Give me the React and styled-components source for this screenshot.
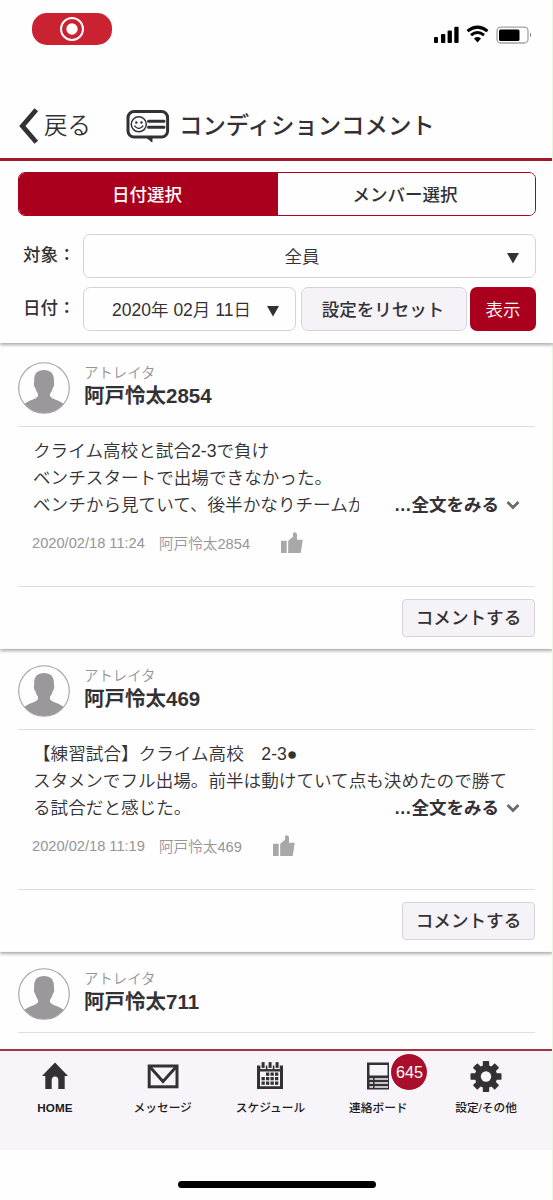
import styled, { createGlobalStyle } from "styled-components";

const red = "#ab001d";
const ink = "#333135";

const GlobalStyle = createGlobalStyle`
  * {
    box-sizing: border-box;
  }
  body {
    margin: 0;
    background: #fefefe;
    color: ${ink};
    font-family: "Liberation Sans", "Noto Sans CJK JP", sans-serif;
    overflow: hidden;
  }
  button {
    font-family: inherit;
    color: inherit;
    padding: 0;
  }
  svg {
    display: block;
    flex: none;
  }
`;

const Screen = styled.div`
  position: relative;
  display: flex;
  flex-direction: column;
  width: 553px;
  height: 1200px;
  overflow: hidden;
`;

const ScreenEdge = styled.div`
  position: absolute;
  top: 0;
  right: 0;
  bottom: 0;
  width: 1px;
  background: #e2fbdc;
`;

const StatusBar = styled.div`
  display: flex;
  justify-content: space-between;
  height: 93px;
  padding: 13px 21px 0 32px;
`;

const RecordPill = styled.div`
  display: flex;
  align-items: center;
  justify-content: center;
  width: 80px;
  height: 32px;
  border-radius: 15px;
  background: #ca2230;
`;

const StatusIcons = styled.div`
  padding-top: 11px;
`;

const Header = styled.header`
  display: flex;
  align-items: center;
  height: 68px;
  padding: 0 19px;
  border-bottom: 3px solid #a31a29;
`;

const Back = styled.div`
  display: flex;
  align-items: center;
  width: 107px;
  gap: 5px;
  font-size: 23.4px;
  font-weight: 350;
  line-height: 32px;
`;

const PageTitle = styled.h1`
  margin: 0 0 0 9px;
  font-size: 23.4px;
  font-weight: 500;
  line-height: 32px;
  white-space: nowrap;
`;

const Filters = styled.section`
  position: relative;
  z-index: 1;
  height: 182px;
  padding: 11px 17px 0 18px;
  background: #fefefe;
  box-shadow: 0 2px 3px rgba(60, 50, 60, 0.4);
`;

const Tabs = styled.div`
  display: flex;
  height: 44px;
  margin-bottom: 18px;
  border: 1.5px solid ${red};
  border-radius: 7px;
  overflow: hidden;
`;

const TabButton = styled.button`
  width: ${p => (p.$active ? "259px" : "auto")};
  flex: ${p => (p.$active ? "none" : 1)};
  padding: 0 3px 2px 0;
  border: 0;
  background: ${p => (p.$active ? red : "#fefefe")};
  color: ${p => (p.$active ? "#fff" : ink)};
  font-size: 17.5px;
  font-weight: 500;
`;

const FilterRow = styled.div`
  display: flex;
  height: 44px;
  margin: 0 -1px 9px 0;
`;

const Label = styled.div`
  width: 65px;
  padding-left: 5px;
  font-size: 17.5px;
  font-weight: 500;
  line-height: 43px;
  white-space: nowrap;
`;

const Select = styled.div`
  display: flex;
  align-items: center;
  width: ${p => p.$width}px;
  padding-right: 16px;
  border: 1.5px solid #d5d3d6;
  border-radius: 7px;
  font-size: 17.5px;
  font-weight: 350;
  span {
    flex: 1;
    padding: ${p => p.$inset || 0};
    text-align: center;
    white-space: nowrap;
  }
  svg {
    margin-top: 3px;
  }
`;

const ResetButton = styled.button`
  width: 166px;
  margin: 0 3px 0 5px;
  padding: 0 2px 2px 0;
  border: 1.5px solid #d5d3d6;
  border-radius: 7px;
  background: #f5f3f7;
  font-size: 17.5px;
  font-weight: 500;
`;

const ShowButton = styled.button`
  width: 66px;
  padding-bottom: 1px;
  border: 0;
  border-radius: 7px;
  background: ${red};
  color: #fff;
  font-size: 17.5px;
  font-weight: 350;
`;

const Feed = styled.main`
  flex: 1;
  min-height: 0;
  padding-top: 3px;
  overflow: hidden;
`;

const Card = styled.article`
  height: 303px;
  padding: 16px 18px 0;
  box-shadow: 0 2px 3px rgba(60, 50, 60, 0.4);
`;

const CardHead = styled.div`
  display: flex;
  height: 65px;
  gap: 14px;
  border-bottom: 1.5px solid #e0dee1;
`;

const Team = styled.div`
  padding-top: 1px;
  color: #979499;
  font-size: 14.4px;
  font-weight: 350;
  line-height: 20px;
`;

const Name = styled.div`
  font-size: 20.5px;
  font-weight: 700;
  line-height: 26px;
`;

const CardBody = styled.div`
  height: 160px;
  padding: 11px 0 0 15px;
  border-bottom: 1.5px solid #e0dee1;
`;

const Comment = styled.div`
  height: 81px;
  font-size: 17.6px;
  font-weight: 350;
  line-height: 26.8px;
  white-space: nowrap;
`;

const LastLine = styled.div`
  display: flex;
  justify-content: space-between;
  height: 27px;
`;

const Clipped = styled.span`
  width: 326px;
  overflow: hidden;
`;

const ReadMore = styled.div`
  display: flex;
  align-items: center;
  height: 27px;
  padding-right: 15px;
  gap: 7px;
  font-size: 17.5px;
  font-weight: 700;
  line-height: 27px;
`;

const Meta = styled.div`
  display: flex;
  align-items: center;
  height: 27px;
  margin: 10px 0 0 -1px;
  color: #97949a;
  font-size: 14.65px;
  font-weight: 350;
  white-space: nowrap;
  svg {
    margin-left: 31px;
  }
`;

const Author = styled.span`
  margin-left: 14px;
`;

const CommentButton = styled.button`
  display: block;
  width: 133px;
  height: 38px;
  margin: 12px 0 0 auto;
  padding: 0 0 3px;
  border: 1.5px solid #d5d3d7;
  border-radius: 4px;
  background: #f5f3f7;
  font-size: 17.6px;
  font-weight: 500;
`;

const NavBar = styled.nav`
  display: flex;
  height: 101px;
  padding: 0 13px 0 1px;
  border-top: 2px solid #a63242;
  background: #f7f5f9;
`;

const NavItem = styled.div`
  position: relative;
  display: flex;
  flex-direction: column;
  align-items: center;
  flex: none;
  width: 107.8px;
  padding-top: 9px;
  color: #1c1a1d;
  font-size: 11.7px;
  font-weight: ${p => (p.$latin ? 700 : 500)};
  line-height: 18px;
  white-space: nowrap;
  svg {
    margin-bottom: 7px;
  }
`;

const Badge = styled.div`
  position: absolute;
  top: 2px;
  left: 66px;
  width: 38px;
  height: 38px;
  border: 1px solid #fff;
  border-radius: 50%;
  background: #a90f2d;
  color: #fff;
  font-size: 16.2px;
  font-weight: 400;
  line-height: 36px;
  text-align: center;
`;

const HomeArea = styled.div`
  display: flex;
  justify-content: center;
  height: 50px;
  padding-top: 31px;
  &::after {
    content: "";
    width: 198px;
    height: 7px;
    border-radius: 4px;
    background: #000;
  }
`;

const RecordIcon = () => (
  <svg width="26" height="26" viewBox="0 0 26 26">
    <circle cx="13" cy="13" r="11" fill="none" stroke="#fff" strokeWidth="2" />
    <circle cx="13" cy="13" r="5.7" fill="#fff" />
  </svg>
);

const SignalIcons = () => (
  <svg width="99" height="20" viewBox="0 0 99 20">
    <rect x="1" y="13" width="4" height="6" rx="1" />
    <rect x="8" y="10" width="4.3" height="9" rx="1" />
    <rect x="14.6" y="6.5" width="4.3" height="12.5" rx="1" />
    <rect x="21.3" y="2.7" width="4.3" height="16.3" rx="1" />
    <g fill="none" stroke="#000" strokeWidth="3">
      <path d="M34.5 7.2Q44.5 -1 54.5 7.2" />
      <path d="M38 11.2Q44.5 5.7 51 11.2" />
    </g>
    <path d="M41 14.5Q44.5 11.7 48 14.5L44.5 18.5Z" />
    <rect x="64" y="3.2" width="31" height="15.8" rx="3.8" fill="none" stroke="#a5a0a5" strokeWidth="1.3" />
    <rect x="66" y="5.5" width="20.5" height="11.5" rx="1.5" />
    <path d="M97 8.5Q99.5 11 97 13.5Z" fill="#8d898d" />
  </svg>
);

const BackIcon = () => (
  <svg width="20" height="36" viewBox="0 0 20 36">
    <path d="M17.3 1.7L3.4 18L17.3 34.3" fill="none" stroke={ink} strokeWidth="4.8" />
  </svg>
);

const ConditionIcon = () => (
  <svg width="44" height="34" viewBox="0 0 44 34" fill="none" stroke={ink}>
    <rect x="2" y="2.6" width="39.6" height="25.4" rx="6" strokeWidth="3" />
    <path d="M20 28L26 33V28Z" fill={ink} strokeWidth="1" />
    <circle cx="12.8" cy="15.3" r="7.5" strokeWidth="1.5" />
    <path d="M8.4 16.6Q12.8 22.3 17.2 16.6" strokeWidth="1.5" />
    <circle cx="10.3" cy="13.5" r="1.2" fill={ink} stroke="none" />
    <circle cx="15.5" cy="13.5" r="1.2" fill={ink} stroke="none" />
    <path d="M22.5 12.3H38M22.5 18.3H38" strokeWidth="3" strokeLinecap="round" />
  </svg>
);

const CaretIcon = () => (
  <svg width="12" height="12" viewBox="0 0 12 12">
    <path d="M0 1H12L6 11.5Z" fill={ink} />
  </svg>
);

const AvatarIcon = () => (
  <svg width="52" height="52" viewBox="0 0 52 52">
    <circle cx="26" cy="26" r="25.3" fill="#fefefe" stroke="#a3a0a4" strokeWidth="1.1" />
    <path
      d="M26 8C33 8 36.5 12 35.9 20C36.8 22 35.8 25 34.8 26C34.2 29 32.5 31 32 32V34C34 38 41 37.5 45.4 42A25.4 25.4 0 0 1 6.6 42C11 37.5 18 38 20 34V32C19.5 31 18 29 17.3 26C16.3 25 15.2 22 16.2 20C15.6 12 19 8 26 8Z"
      fill="#9b989c"
    />
  </svg>
);

const ChevronIcon = () => (
  <svg width="14" height="10" viewBox="0 0 14 10">
    <path d="M1.5 2L7 7.5L12.5 2" fill="none" stroke="#6d6a6e" strokeWidth="2.8" />
  </svg>
);

const LikeIcon = () => (
  <svg width="22" height="22" viewBox="0 0 22 22" fill="#aaa7ab">
    <rect x="0" y="8.8" width="5.7" height="12.2" />
    <path d="M7.2 21V8.8L12 4.8V1.5Q12.3 .3 14 .3Q16.2 .5 16 3V7.8H21.8L19.7 21Z" />
  </svg>
);

const HomeIcon = () => (
  <svg width="32" height="32" viewBox="0 0 32 32">
    <path d="M16 2.5L29 16H25.7V29H19.3V20Q19.3 16.5 16 16.5Q12.7 16.5 12.7 20V29H6.3V16H3Z" fill={ink} />
  </svg>
);

const MailIcon = () => (
  <svg width="32" height="32" viewBox="0 0 32 32" fill="none" stroke={ink} strokeWidth="3">
    <rect x="2.2" y="6" width="27.8" height="20.8" />
    <path d="M3 7L16 21.5L29 7" />
  </svg>
);

const CalendarIcon = () => (
  <svg width="32" height="32" viewBox="0 0 32 32" fill={ink}>
    <path d="M3 5.5H29V29H3ZM6 11.5V26.2H26V11.5Z" fillRule="evenodd" />
    <g stroke="#f7f5f9" strokeWidth="1.2">
      <rect x="7" y="1.5" width="4.2" height="7" />
      <rect x="14" y="1.5" width="4.2" height="7" />
      <rect x="21" y="1.5" width="4.2" height="7" />
    </g>
    {[12.5, 17, 21.5].map(y =>
      [7.5, 12, 16.5, 21].map(x =>
        y === 12.5 && x === 7.5 ? null : <rect key={`${x}-${y}`} x={x} y={y} width="3.3" height="3.3" />
      )
    )}
  </svg>
);

const BoardIcon = () => (
  <svg width="32" height="32" viewBox="0 0 32 32">
    <path d="M5 2.5H27V29.5H5Z" fill={ink} />
    <path d="M7.5 5H25.5V15.5H7.5Z" fill="#f7f5f9" />
    <path d="M7.5 19H11M12.5 19H26M7.5 23H11M12.5 23H26M7.5 27H11M12.5 27H26" stroke="#f7f5f9" strokeWidth="1.6" />
  </svg>
);

const GearIcon = () => (
  <svg width="32" height="32" viewBox="0 0 32 32" fill={ink}>
    {[0, 45, 90, 135].map(a => (
      <rect key={a} x="12.8" y="1" width="6.4" height="31" rx="0.8" transform={`rotate(${a} 16 16.5)`} />
    ))}
    <circle cx="16" cy="16.5" r="11.2" />
    <circle cx="16" cy="16.5" r="5.2" fill="#f7f5f9" />
  </svg>
);

const posts = [
  {
    name: "阿戸怜太2854",
    lines: ["クライム高校と試合2-3で負け", "ベンチスタートで出場できなかった。"],
    lastLine: "ベンチから見ていて、後半かなりチームが",
    date: "2020/02/18 11:24"
  },
  {
    name: "阿戸怜太469",
    lines: ["【練習試合】クライム高校　2-3●", "スタメンでフル出場。前半は動けていて点も決めたので勝て"],
    lastLine: "る試合だと感じた。",
    date: "2020/02/18 11:19"
  },
  { name: "阿戸怜太711" }
];

const Post = ({ post }) => (
  <Card>
    <CardHead>
      <AvatarIcon />
      <div>
        <Team>アトレイタ</Team>
        <Name>{post.name}</Name>
      </div>
    </CardHead>
    {post.lines && (
      <>
        <CardBody>
          <Comment>
            {post.lines.map(line => (
              <div key={line}>{line}</div>
            ))}
            <LastLine>
              <Clipped>{post.lastLine}</Clipped>
              <ReadMore>
                …全文をみる
                <ChevronIcon />
              </ReadMore>
            </LastLine>
          </Comment>
          <Meta>
            {post.date}
            <Author>{post.name}</Author>
            <LikeIcon />
          </Meta>
        </CardBody>
        <CommentButton>コメントする</CommentButton>
      </>
    )}
  </Card>
);

const App = () => (
  <Screen>
    <GlobalStyle />
    <StatusBar>
      <RecordPill>
        <RecordIcon />
      </RecordPill>
      <StatusIcons>
        <SignalIcons />
      </StatusIcons>
    </StatusBar>
    <Header>
      <Back>
        <BackIcon />
        戻る
      </Back>
      <ConditionIcon />
      <PageTitle>コンディションコメント</PageTitle>
    </Header>
    <Filters>
      <Tabs>
        <TabButton $active>日付選択</TabButton>
        <TabButton>メンバー選択</TabButton>
      </Tabs>
      <FilterRow>
        <Label>対象：</Label>
        <Select $width={453} $inset="0 0 2px 13px">
          <span>全員</span>
          <CaretIcon />
        </Select>
      </FilterRow>
      <FilterRow>
        <Label>日付：</Label>
        <Select $width={213} $inset="0 0 1px 12px">
          <span>2020年 02月 11日</span>
          <CaretIcon />
        </Select>
        <ResetButton>設定をリセット</ResetButton>
        <ShowButton>表示</ShowButton>
      </FilterRow>
    </Filters>
    <Feed>
      {posts.map(post => (
        <Post key={post.name} post={post} />
      ))}
    </Feed>
    <NavBar>
      <NavItem $latin>
        <HomeIcon />
        HOME
      </NavItem>
      <NavItem>
        <MailIcon />
        メッセージ
      </NavItem>
      <NavItem>
        <CalendarIcon />
        スケジュール
      </NavItem>
      <NavItem>
        <BoardIcon />
        連絡ボード
        <Badge>645</Badge>
      </NavItem>
      <NavItem>
        <GearIcon />
        設定/その他
      </NavItem>
    </NavBar>
    <HomeArea />
    <ScreenEdge />
  </Screen>
);

export default App;
